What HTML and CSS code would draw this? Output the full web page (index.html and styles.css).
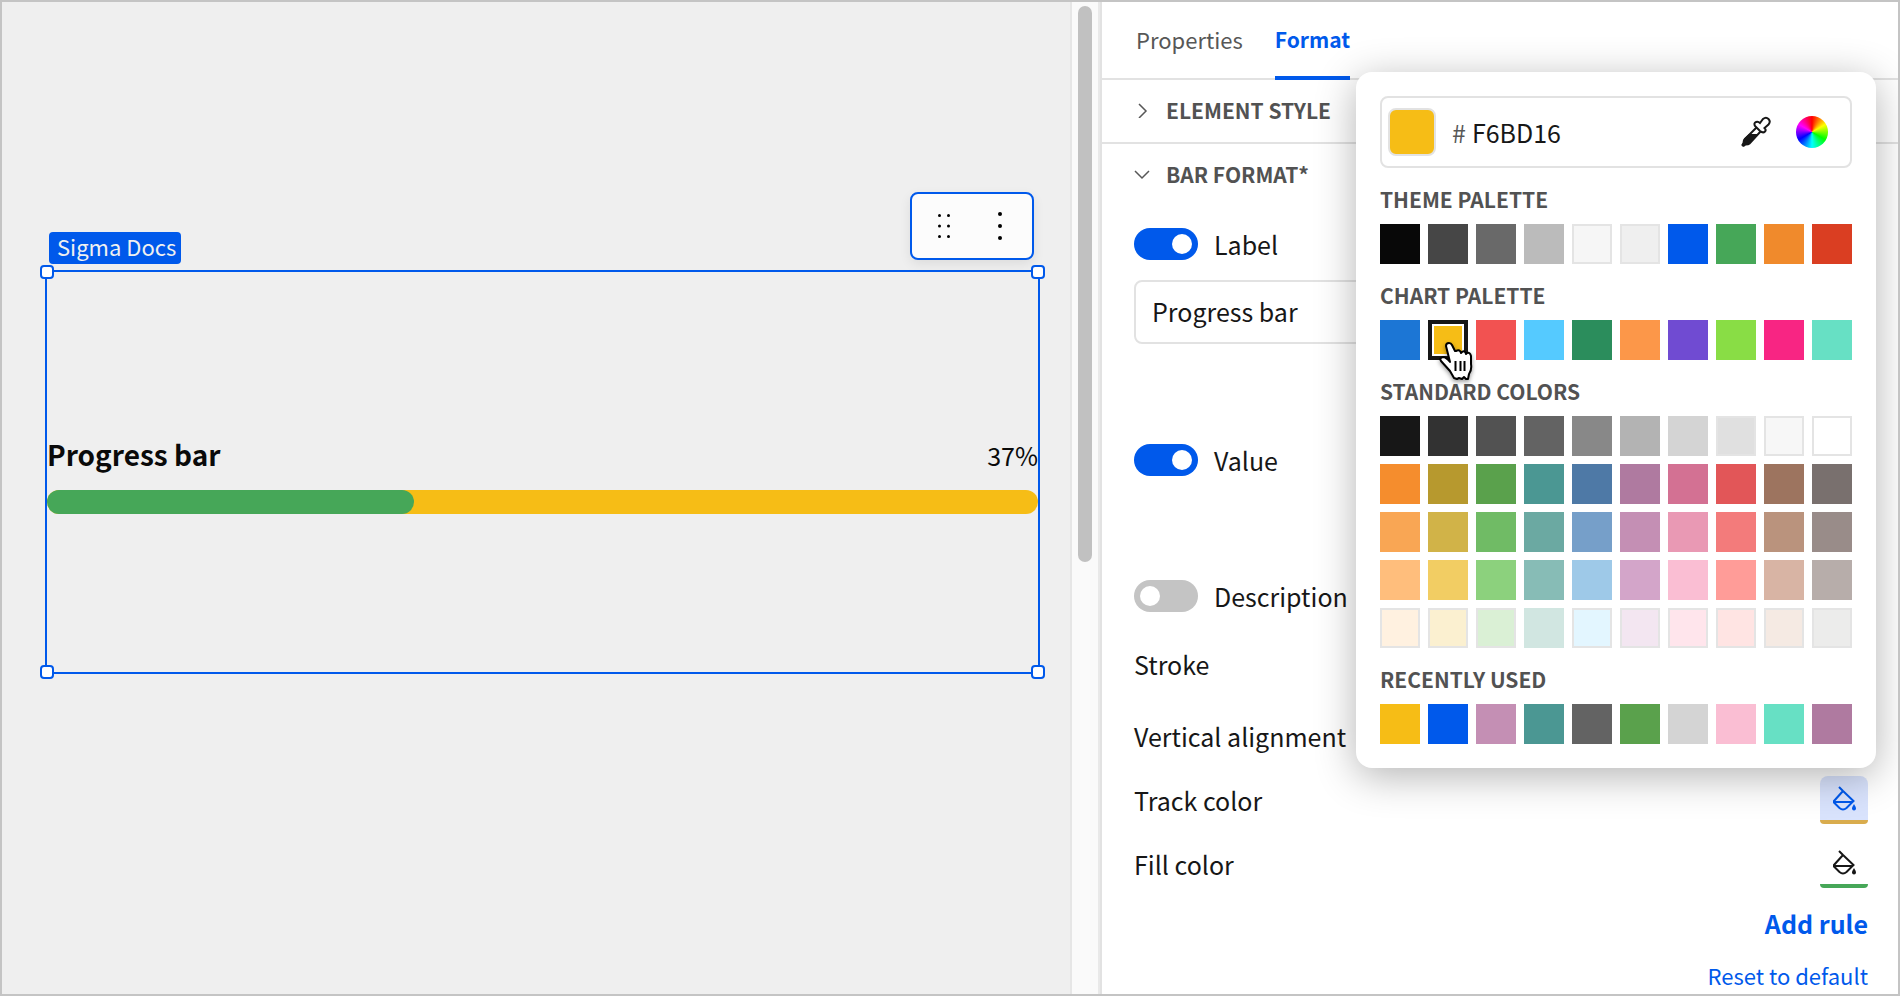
FILE: index.html
```html
<!DOCTYPE html>
<html lang="en">
<head>
  <meta charset="UTF-8">
  <meta name="viewport" content="width=device-width, initial-scale=1.0">
  <title>Sigma Docs - Progress bar</title>
  <link rel="stylesheet" href="styles.css">
</head>
<body>
  <main class="canvas">
    <div class="canvas-top">
      <span class="tag">Sigma Docs</span>
      <div class="toolbar">
        <button aria-label="Drag element">
          <svg width="16" height="28" viewBox="0 0 16 28">
            <circle cx="3.500" cy="3.500" r="1.500"/><circle cx="12.500" cy="3.500" r="1.500"/>
            <circle cx="3.500" cy="14" r="1.500"/><circle cx="12.500" cy="14" r="1.500"/>
            <circle cx="3.500" cy="24.500" r="1.500"/><circle cx="12.500" cy="24.500" r="1.500"/>
          </svg>
        </button>
        <button aria-label="More options">
          <svg width="16" height="28" viewBox="0 0 16 28">
            <circle cx="8" cy="2" r="2"/><circle cx="8" cy="14" r="2"/><circle cx="8" cy="26" r="2"/>
          </svg>
        </button>
      </div>
    </div>
    <div class="element">
      <div class="progress-head">
        <span class="progress-title">Progress bar</span>
        <span class="progress-value">37%</span>
      </div>
      <div class="track"><div class="fill" style="width: 37%"></div></div>
      <i class="handle top left"></i>
      <i class="handle top right"></i>
      <i class="handle bottom left"></i>
      <i class="handle bottom right"></i>
    </div>
  </main>

  <div class="scrollbar"><div class="thumb"></div></div>

  <aside class="panel">
    <nav class="tabs">
      <a href="#properties">Properties</a>
      <a href="#format" class="active">Format</a>
    </nav>

    <button class="section">
      <svg width="16" height="16" viewBox="0 0 16 16"><path d="M5 2l7 7-7 7"/></svg>
      ELEMENT STYLE
    </button>
    <button class="section open">
      <svg width="16" height="16" viewBox="0 0 16 16"><path d="M1 5l7 7 7-7"/></svg>
      BAR FORMAT*
    </button>

    <div class="settings">
      <label class="toggle"><input type="checkbox" checked>Label</label>
      <input class="text-input" type="text" value="Progress bar" aria-label="Label text">
      <label class="toggle value"><input type="checkbox" checked>Value</label>
      <label class="toggle description"><input type="checkbox">Description</label>
      <div class="row stroke">Stroke</div>
      <div class="row">Vertical alignment</div>
      <div class="row">
        Track color
        <button class="color-button track-color" aria-label="Track color">
          <svg width="24" height="26" viewBox="0 0 24 26"><path d="M6 1l4 4L20.500 15 13.500 22q-3.500 3-7 0L1 16.500V15L10 5M1 16h19"/><path class="drop" d="M21 18q2 3 2 4.500a2 2 0 0 1-4 0q0-1.500 2-4.500z"/></svg>
        </button>
      </div>
      <div class="row">
        Fill color
        <button class="color-button fill-color" aria-label="Fill color">
          <svg width="24" height="26" viewBox="0 0 24 26"><path d="M6 1l4 4L20.500 15 13.500 22q-3.500 3-7 0L1 16.500V15L10 5M1 16h19"/><path class="drop" d="M21 18q2 3 2 4.500a2 2 0 0 1-4 0q0-1.500 2-4.500z"/></svg>
        </button>
      </div>
      <div class="actions">
        <button class="add-rule">Add rule</button>
        <button class="reset">Reset to default</button>
      </div>
    </div>

    <div class="picker">
      <div class="hex">
        <span class="preview"></span>
        <label for="hexValue">#</label>
        <input id="hexValue" type="text" value="F6BD16">
        <button aria-label="Pick from screen">
          <svg class="dropper" width="32" height="32" viewBox="0 0 32 32">
            <path d="M17 11L5 23q-1 1-1 4l-1 1.500 1 1 1.500-1q3 0 4-1L21 15z" fill="#fff"/>
            <path d="M9 18h9l-8 9q-1.500 1.500-4 1.500L4 30.500Q2 31 1.500 29.500q-.5-1 1-2.500 0-3 1.500-4.500z" class="ink"/>
            <path d="M20 15l-5-5q-1.500-3 1-4 2-1 4 1l3-4q3-2.500 5.500 0t0 5.500l-4 3.500q2 2 .5 3.500-2 2-5-.5z" fill="#fff"/>
          </svg>
        </button>
        <button class="wheel" aria-label="Color wheel"></button>
      </div>
      <h3>THEME PALETTE</h3>
      <div class="swatches" data-palette="theme"></div>
      <h3>CHART PALETTE</h3>
      <div class="swatches" data-palette="chart"></div>
      <h3>STANDARD COLORS</h3>
      <div class="swatches" data-palette="standard"></div>
      <h3>RECENTLY USED</h3>
      <div class="swatches" data-palette="recent"></div>
    </div>
  </aside>

  <script src="script.js"></script>
</body>
</html>
```
FILE: styles.css
```css
* {
  box-sizing: border-box;
}
body {
  display: flex;
  min-height: 100vh;
  margin: 0;
  border: 2px solid #c4c4c4;
  background: #fff;
  color: #171717;
  font-family: "Noto Sans CJK SC", "Noto Sans", sans-serif;
  font-size: 25px;
  line-height: 32px;
}
button, input {
  margin: 0;
  padding: 0;
  border: 0;
  background: none;
  color: inherit;
  font: inherit;
}
button {
  cursor: pointer;
}

/* canvas */
.canvas {
  flex: 1;
  padding: 190px 30px 0 43px;
  background: #efefef;
}
.canvas-top {
  display: flex;
  justify-content: space-between;
  align-items: flex-end;
  padding: 0 6px 6px 4px;
}
.tag {
  padding: 0 5px 4px 8px;
  border-radius: 4px;
  background: #0059eb;
  color: #f0f0f0;
  font-size: 22px;
  line-height: 28px;
}
.toolbar {
  display: flex;
  justify-content: space-around;
  align-items: center;
  width: 124px;
  height: 68px;
  margin-bottom: 4px;
  padding: 0 4px;
  border: 2px solid #0059eb;
  border-radius: 8px;
  background: #fcfcfc;
  box-shadow: 0 4px 12px rgba(0, 0, 0, 0.08);
}
.toolbar svg {
  display: block;
}
.element {
  position: relative;
  height: 404px;
  padding-top: 163px;
  border: 2px solid #0059eb;
}
.progress-head {
  display: flex;
  justify-content: space-between;
  align-items: baseline;
  margin-bottom: 16px;
  line-height: 38px;
  color: #0a0a0a;
}
.progress-title {
  font-size: 28px;
  font-weight: 600;
}
.track {
  height: 24px;
  border-radius: 12px;
  background: #f6bd16;
}
.fill {
  height: 24px;
  border-radius: 12px;
  background: #46a758;
}
.handle {
  position: absolute;
  width: 14px;
  height: 14px;
  border: 2px solid #0059eb;
  border-radius: 4px;
  background: #fff;
}
.top { top: -7px; }
.bottom { bottom: -7px; }
.left { left: -7px; }
.right { right: -7px; }

.scrollbar {
  width: 30px;
  padding: 4px 6px;
  border-left: 2px solid #e6e6e6;
  border-right: 2px solid #e9e9e9;
  background: #fafafa;
}
.thumb {
  height: 556px;
  border-radius: 8px;
  background: #c1c1c1;
}

/* format panel */
.panel {
  position: relative;
  width: 798px;
  border-left: 2px solid #e2e2e2;
}
.tabs {
  display: flex;
  gap: 32px;
  height: 78px;
  padding-left: 34px;
  border-bottom: 2px solid #e2e2e2;
  font-size: 22px;
}
.tabs a {
  height: 78px;
  padding-top: 21px;
  color: #575757;
  text-decoration: none;
}
.tabs .active {
  border-bottom: 4px solid #0059eb;
  color: #0059eb;
  font-size: 21px;
  font-weight: 600;
}
.section {
  display: flex;
  align-items: center;
  gap: 16px;
  width: 100%;
  height: 64px;
  padding: 0 0 2px 32px;
  border-bottom: 2px solid #e2e2e2;
  color: #525252;
  font-size: 21px;
  font-weight: 600;
}
.section.open {
  border-bottom-color: transparent;
}
.section svg {
  fill: none;
  stroke: #575757;
  stroke-width: 1.500;
}
.settings {
  padding: 20px 30px 0 32px;
}
.toggle {
  display: flex;
  align-items: center;
  gap: 16px;
}
.toggle input {
  appearance: none;
  width: 64px;
  height: 32px;
  padding: 6px;
  border-radius: 16px;
  background: #c4c4c4;
}
.toggle input::before {
  content: "";
  display: block;
  width: 20px;
  height: 20px;
  border-radius: 50%;
  background: #fff;
}
.toggle input:checked {
  background: #0059eb;
}
.toggle input:checked::before {
  margin-left: auto;
}
.text-input {
  width: 100%;
  height: 64px;
  margin-top: 20px;
  padding: 0 16px 2px;
  border: 2px solid #e2e2e2;
  border-radius: 8px;
}
.value {
  margin-top: 100px;
}
.description {
  margin: 104px 0 20px;
}
.row {
  display: flex;
  justify-content: space-between;
  align-items: center;
  height: 64px;
}
.stroke {
  margin-bottom: 8px;
}
.color-button {
  display: grid;
  place-items: center;
  width: 48px;
  height: 48px;
  padding: 2px 0 0 2px;
  border-bottom: 4px solid #46a758;
  border-radius: 8px 8px 4px 4px;
}
.color-button svg {
  fill: none;
  stroke: currentColor;
  stroke-width: 2;
}
.color-button .drop {
  fill: currentColor;
  stroke: none;
}
.track-color {
  border-color: #d9ac4d;
  background: #d9e3fd;
  color: #0059eb;
}
.actions {
  display: flex;
  flex-direction: column;
  align-items: flex-end;
  gap: 20px;
  padding-top: 11px;
  color: #0059eb;
}
.add-rule {
  font-weight: 600;
}
.reset {
  font-size: 22px;
}

/* color picker */
.picker {
  position: absolute;
  top: 70px;
  right: 22px;
  width: 520px;
  padding: 24px;
  border-radius: 16px;
  background: #fff;
  box-shadow: 0 8px 40px rgba(0, 0, 0, 0.3);
}
.hex {
  display: flex;
  align-items: center;
  height: 72px;
  padding: 0 22px 0 6px;
  border: 2px solid #e2e2e2;
  border-radius: 8px;
}
.hex label {
  margin: 0 6px 0 16px;
  color: #575757;
}
.hex input {
  flex: 1;
  min-width: 0;
}
.hex svg {
  display: block;
}
.preview {
  width: 48px;
  height: 48px;
  border: 2px solid #e2e2e2;
  border-radius: 8px;
  background: #f6bd16;
}
.dropper {
  fill: none;
  stroke: #171717;
  stroke-width: 2;
}
.dropper .ink {
  fill: #171717;
  stroke: none;
}
.wheel {
  width: 32px;
  height: 32px;
  margin-left: 24px;
  border-radius: 50%;
  background: conic-gradient(red, yellow, lime, cyan, blue, magenta, red);
}
.picker h3 {
  height: 56px;
  margin: 0;
  padding-top: 15px;
  color: #525252;
  font-size: 21px;
  font-weight: 600;
}
.swatches {
  display: grid;
  grid-template-columns: repeat(10, 40px);
  gap: 8px;
}
.swatch {
  position: relative;
  height: 40px;
}
.swatch.light {
  border: 2px solid #e4e4e4;
}
.swatch.selected {
  border: 4px solid #171717;
  box-shadow: inset 0 0 0 2px #fff;
}
.pointer {
  position: absolute;
  top: 14px;
  left: 6px;
  z-index: 1;
  filter: drop-shadow(0 2px 2px rgba(0, 0, 0, 0.4));
}
```
FILE: script.js
```js
const palettes = {
  theme: ['#080808', '#464646', '#696969', '#bbbbbb', '#f6f6f6', '#efefef', '#0059eb', '#46a758', '#f08a2c', '#da3e22'],
  chart: ['#1c76d5', '#f6bd16', '#f25251', '#55caff', '#2b8d5c', '#fc9749', '#704bd2', '#89dd45', '#f82583', '#67e0c4'],
  standard: [
    '#171717', '#323232', '#525252', '#636363', '#888888', '#b3b3b3', '#d4d4d4', '#e0e0e0', '#f7f7f7', '#ffffff',
    '#f58d2d', '#b7992e', '#5aa14c', '#4b9793', '#4e79a6', '#af7aa0', '#d37193', '#e25658', '#9d745f', '#79706e',
    '#f9a654', '#d1b348', '#70bb65', '#6ba9a2', '#769fc9', '#c48fb4', '#e999b4', '#f37b7b', '#ba937d', '#998c89',
    '#ffbe7c', '#f2cd63', '#8cd17d', '#87bcb6', '#9ec9e8', '#d3a5c9', '#fabed3', '#ff9c98', '#d8b4a4', '#b7adaa',
    '#fff1e0', '#fbf0d0', '#daf0d5', '#d1e6e1', '#e3f6ff', '#f3e6f1', '#ffe5ec', '#ffe4e3', '#f5eae3', '#ececeb'
  ],
  recent: ['#f6bd16', '#0059eb', '#c48fb4', '#4b9793', '#636363', '#5aa14c', '#d4d4d4', '#fabed3', '#67e0c4', '#af7aa0']
};
const outlined = ['#f6f6f6', '#efefef', '#e0e0e0', '#f7f7f7', '#ffffff', '#fff1e0', '#fbf0d0', '#daf0d5', '#e3f6ff', '#f3e6f1', '#ffe5ec', '#ffe4e3', '#f5eae3', '#ececeb'];

const pointer = `<svg class="pointer" width="40" height="44" viewBox="0 0 40 44">
  <path d="M11 5q-3 0-3 3l4 16q-4-5-7-5-4 1-2 4l9 10 4 7 3 1 2-1 3 1 2-2 2 2h2l1-5q3-4 2-10V18q-1-4-4-3l-1 1q-1-4-4-2l-1 1q-1-4-5-2h-1L14 7q-1-2-3-2z" fill="#fff" stroke="#000" stroke-width="2" stroke-linejoin="round"/>
  <path d="M17.500 23v10M22.500 23v10M26.500 23v10" stroke="#000" stroke-width="2"/>
</svg>`;

document.querySelectorAll('.swatches').forEach(grid => {
  const name = grid.dataset.palette;
  palettes[name].forEach((color, i) => {
    const swatch = document.createElement('button');
    swatch.className = 'swatch';
    swatch.style.backgroundColor = color;
    swatch.setAttribute('aria-label', color);
    if (outlined.includes(color)) swatch.classList.add('light');
    if (name === 'chart' && i === 1) {
      swatch.classList.add('selected');
      swatch.innerHTML = pointer;
    }
    grid.appendChild(swatch);
  });
});
```
